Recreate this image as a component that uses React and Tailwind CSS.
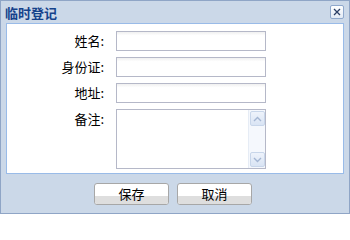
import React from "react";

const font = { fontFamily: '"Noto Sans CJK SC", "Liberation Sans", sans-serif' };

function Field({ label, children }) {
  return (
    <div className="flex items-start">
      <div className="w-[103px] pr-[6px] text-right text-[13px] leading-[20px] text-black">{label}</div>
      <div className="ml-[6px]">{children}</div>
    </div>
  );
}

function TextInput() {
  return (
    <input
      type="text"
      className="block h-[20px] w-[150px] border border-[#b5b8c8] bg-white bg-gradient-to-b from-[#f0f0f0] to-white to-[20%] px-1 text-[12px] outline-none"
    />
  );
}

function ScrollArrow({ up }) {
  return (
    <div className="flex h-[15px] w-[15px] items-center justify-center rounded-[2px] border border-[#c8d6ea] bg-gradient-to-b from-[#eef3fb] to-[#d9e4f4]">
      <svg width="9" height="6" viewBox="0 0 9 6">
        <path d={up ? "M1 5 L4.5 1.5 L8 5" : "M1 1 L4.5 4.5 L8 1"} fill="none" stroke="#a4b6d3" strokeWidth="1.4" />
      </svg>
    </div>
  );
}

function Button({ children }) {
  return (
    <button className="relative h-[22px] w-[75px] overflow-hidden rounded-[3px] border border-[#a7a7a7] bg-white text-[13px] leading-[20px] text-black">
      <span className="absolute inset-x-0 bottom-0 h-[8px] bg-[#dedede]" />
      <span className="relative">{children}</span>
    </button>
  );
}

export default function App() {
  return (
    <div style={font} className="flex h-[214px] w-[350px] flex-col border border-[#8fa5c6] bg-[#cbd8e8]">
      <div className="flex h-[22px] items-center justify-between pl-[4px] pr-[5px]">
        <span className="text-[13px] font-bold leading-none text-[#15428b]">临时登记</span>
        <div className="flex h-[14px] w-[14px] items-center justify-center rounded-[2px] border border-[#8fa8cc] bg-gradient-to-b from-white to-[#e2eaf5]">
          <svg width="8" height="8" viewBox="0 0 8 8">
            <path d="M1 1 L7 7 M7 1 L1 7" stroke="#2b3f66" strokeWidth="1.3" />
          </svg>
        </div>
      </div>
      <div className="mx-[5px] flex h-[151px] flex-col gap-[6px] border border-[#99bbe8] bg-white pt-[7px]">
        <Field label="姓名:"><TextInput /></Field>
        <Field label="身份证:"><TextInput /></Field>
        <Field label="地址:"><TextInput /></Field>
        <Field label="备注:">
          <div className="flex h-[60px] w-[150px] border border-[#b5b8c8] bg-white">
            <div className="flex-1" />
            <div className="flex w-[17px] flex-col justify-between border-l border-[#e6ecf5] bg-[#f5f8fd] p-[1px]">
              <ScrollArrow up />
              <ScrollArrow />
            </div>
          </div>
        </Field>
      </div>
      <div className="flex flex-1 items-center justify-center gap-[8px] pl-[1px] pr-[5px]">
        <Button>保存</Button>
        <Button>取消</Button>
      </div>
    </div>
  );
}
